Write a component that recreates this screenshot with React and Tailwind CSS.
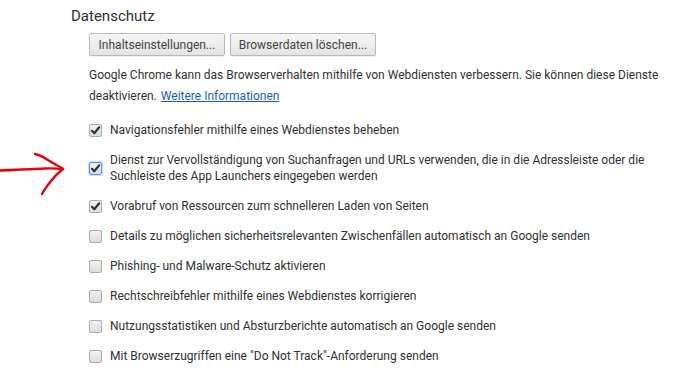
import React from "react";

const options = [
  { label: "Navigationsfehler mithilfe eines Webdienstes beheben", checked: true },
  {
    label:
      "Dienst zur Vervollständigung von Suchanfragen und URLs verwenden, die in die Adressleiste oder die Suchleiste des App Launchers eingegeben werden",
    checked: true,
    focused: true,
  },
  { label: "Vorabruf von Ressourcen zum schnelleren Laden von Seiten", checked: true },
  { label: "Details zu möglichen sicherheitsrelevanten Zwischenfällen automatisch an Google senden", checked: false },
  { label: "Phishing- und Malware-Schutz aktivieren", checked: false },
  { label: "Rechtschreibfehler mithilfe eines Webdienstes korrigieren", checked: false },
  { label: "Nutzungsstatistiken und Absturzberichte automatisch an Google senden", checked: false },
  { label: 'Mit Browserzugriffen eine "Do Not Track"-Anforderung senden', checked: false },
];

const Checkbox = ({ checked, focused }) => (
  <span
    className={
      "shrink-0 w-[13px] h-[13px] rounded-[2px] border bg-gradient-to-b from-[#f2f2f2] to-[#dcdcdc] flex items-center justify-center " +
      (focused ? "border-[#4d90fe] shadow-[0_0_1px_1px_rgba(77,144,254,0.35)]" : "border-[#aaaaaa]")
    }
  >
    {checked && (
      <svg width="11" height="11" viewBox="0 0 11 11">
        <path d="M2 5.8 L4.3 8.2 L9.2 2.3" fill="none" stroke="#333" strokeWidth="2.2" strokeLinecap="round" strokeLinejoin="round" />
      </svg>
    )}
  </span>
);

const Button = ({ children, className }) => (
  <button
    className={
      "h-[23px] rounded-[2px] border border-[#b8b8b8] bg-gradient-to-b from-[#f6f6f6] to-[#e3e3e3] text-[12px] text-[#444] leading-none text-center shadow-[0_1px_0_rgba(0,0,0,0.06)] " +
      className
    }
  >
    {children}
  </button>
);

export default function App() {
  return (
    <div className="relative w-[687px] h-[385px] bg-white overflow-hidden text-[#303030] font-['Roboto',sans-serif]">
      {/* hand-drawn red arrow */}
      <svg className="absolute left-0 top-[145px]" width="70" height="55" viewBox="0 0 70 55">
        <path d="M0 25.5 C15 25 30 24 45 23.5 C52 23.3 58 23.5 63 24" fill="none" stroke="#e8000b" strokeWidth="2.4" strokeLinecap="round" />
        <path d="M35 9 C40 10 44 12 48 15 C54 19 59 21 63 24" fill="none" stroke="#e8000b" strokeWidth="2.4" strokeLinecap="round" />
        <path d="M63 24 C58 28 54 32 51 36 C47 41 44 45 42 49" fill="none" stroke="#e8000b" strokeWidth="2.4" strokeLinecap="round" />
      </svg>

      <div className="pl-[71px] pt-[6px]">
        <h3 className="text-[15px] leading-[20px] text-[#303030]">Datenschutz</h3>
        <div className="pl-[18px]">
          <div className="flex gap-[5px] mt-[7px]">
            <Button className="w-[136px]">Inhaltseinstellungen...</Button>
            <Button className="w-[146px]">Browserdaten löschen...</Button>
          </div>
          <div className="mt-[9px] text-[12px] leading-[21px]">
            <div>Google Chrome kann das Browserverhalten mithilfe von Webdiensten verbessern. Sie können diese Dienste</div>
            <div className="flex gap-[4px]">
              <span>deaktivieren.</span>
              <a className="text-[#1a5ac9] underline">Weitere Informationen</a>
            </div>
          </div>
          <div className="mt-[8px] flex flex-col">
            {options.map((o) => (
              <label key={o.label} className="flex items-center gap-[8px] py-[7px]">
                <Checkbox checked={o.checked} focused={o.focused} />
                <span className="text-[12px] leading-[16px] w-[540px]">{o.label}</span>
              </label>
            ))}
          </div>
        </div>
      </div>
    </div>
  );
}
